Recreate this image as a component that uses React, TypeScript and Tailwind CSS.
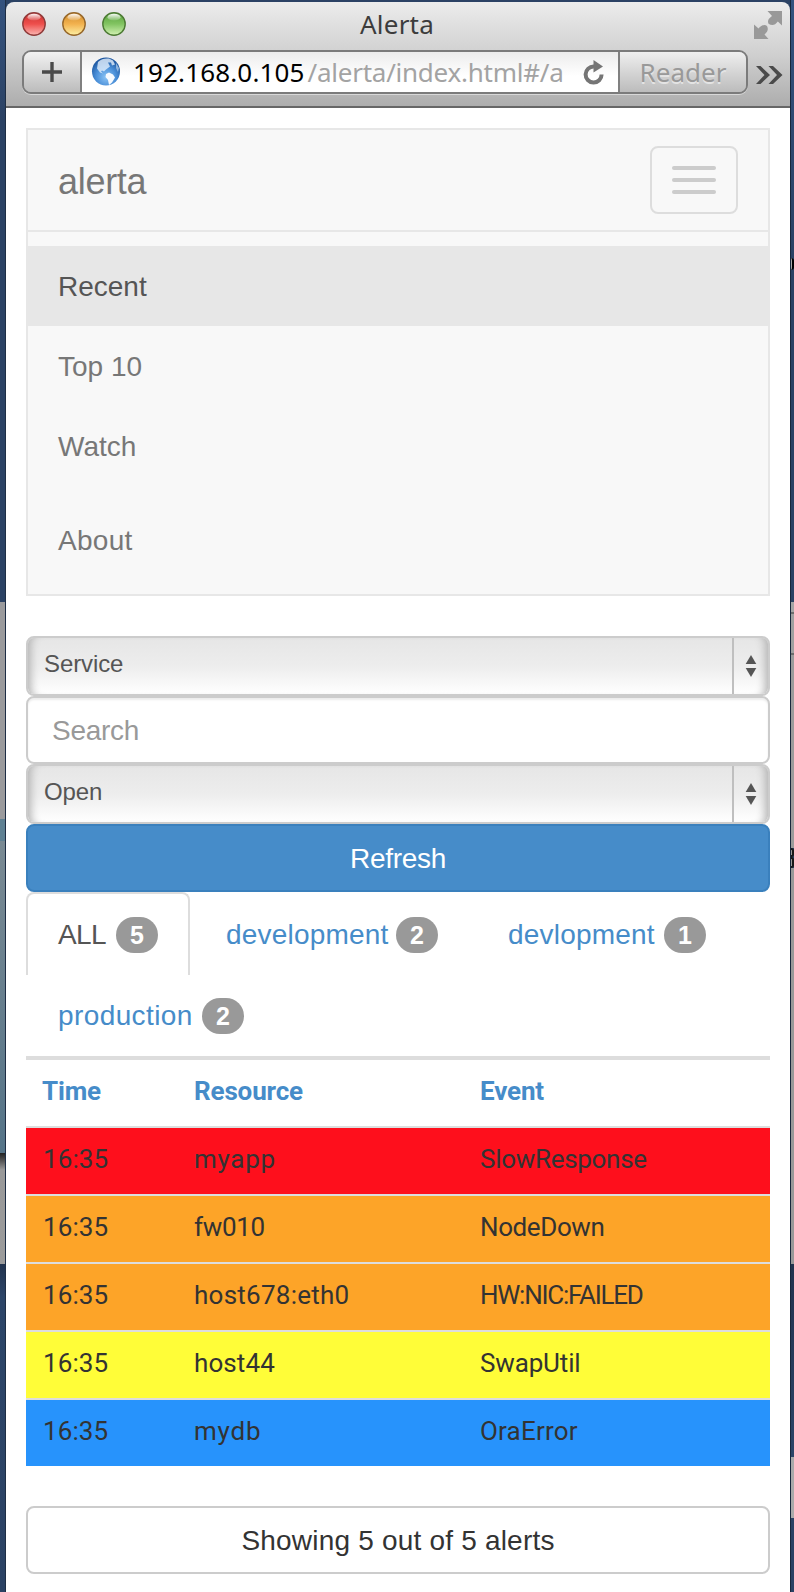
import React from "react";

const SANS = "font-['Liberation_Sans',Arial,sans-serif]";

const navLinks = [
  { label: "Recent", cls: "bg-[#e7e7e7] text-[#555]" },
  { label: "Top 10", cls: "text-[#777]" },
  { label: "Watch", cls: "text-[#777]" },
  { label: "About", cls: "mt-[14px] text-[#777] tracking-[0.3px]" },
];

const alerts = [
  { time: "16:35", resource: "myapp", event: "SlowResponse", cls: "bg-[#fe0f1c]", rGap: "tracking-[0.7px]", eGap: "tracking-[-0.3px]" },
  { time: "16:35", resource: "fw010", event: "NodeDown", cls: "bg-[#fda428]", rGap: "tracking-[-0.3px]", eGap: "tracking-[-0.4px]" },
  { time: "16:35", resource: "host678:eth0", event: "HW:NIC:FAILED", cls: "bg-[#fda428]", rGap: "tracking-[0.25px]", eGap: "tracking-[-1.25px]" },
  { time: "16:35", resource: "host44", event: "SwapUtil", cls: "bg-[#fffd38]", rGap: "tracking-[0.1px]", eGap: "tracking-[-0.15px]" },
  { time: "16:35", resource: "mydb", event: "OraError", cls: "bg-[#2793fc]", rGap: "tracking-[0.8px]", eGap: "tracking-[0.2px]" },
];

function TrafficLight({ id, edge, dark, mid, light }: { id: string; edge: string; dark: string; mid: string; light: string }) {
  return (
    <svg width="24" height="24" viewBox="0 0 24 24" className="block">
      <defs>
        <linearGradient id={id} x1="0" y1="0" x2="0" y2="1">
          <stop offset="0" stopColor={dark} />
          <stop offset="0.5" stopColor={mid} />
          <stop offset="1" stopColor={light} />
        </linearGradient>
        <linearGradient id={id + "g"} x1="0" y1="0" x2="0" y2="1">
          <stop offset="0" stopColor="#fff" stopOpacity="0.95" />
          <stop offset="1" stopColor="#fff" stopOpacity="0.1" />
        </linearGradient>
      </defs>
      <circle cx="12" cy="12" r="11.2" fill={`url(#${id})`} stroke={edge} strokeWidth="1.4" />
      <ellipse cx="12" cy="5.2" rx="6.5" ry="3.4" fill={`url(#${id}g)`} />
    </svg>
  );
}

function Globe() {
  return (
    <svg width="30" height="30" viewBox="0 0 30 30" className="block">
      <defs>
        <radialGradient id="sea" cx="0.5" cy="0.7" r="0.65">
          <stop offset="0" stopColor="#8cc4f5" />
          <stop offset="0.55" stopColor="#4a8fd8" />
          <stop offset="1" stopColor="#1d569f" />
        </radialGradient>
      </defs>
      <circle cx="15" cy="14.5" r="14" fill="url(#sea)" />
      <path d="M7 5C10 2 14 1 18 1.5l4 2 2 4-3 1-1-3-3 0 2 4-4 3-2 2-2-1-1 1 2 2-3-1-3-4Z" fill="#e3effb" opacity="0.8" />
      <path d="M15 17l3-1.500 4 2 2 3-3 5-3 2.500-1-5-2.500-3Z" fill="#f6faff" />
      <path d="M25 6l3 5-1 4-2-4Z" fill="#cfe2f7" opacity="0.6" />
    </svg>
  );
}

function SelectBox({ label }: { label: string }) {
  return (
    <div className="flex h-[60px] w-full overflow-hidden rounded-[8px] border-2 border-[#ccc] bg-linear-to-b from-[#e6e6e6] via-[#ededed] to-white shadow-[inset_10px_0_8px_-7px_#b4b4b4,inset_-10px_0_8px_-7px_#b4b4b4]">
      <div className="flex-1 pl-4 text-[24px] leading-[51px] tracking-[-0.1px] text-[#555]">{label}</div>
      <div className="flex w-[36px] items-center justify-center border-l-2 border-[#bfbfbf]">
        <svg width="12" height="22" viewBox="0 0 12 22" className="mr-[1px] block" fill="#555">
          <path d="M6 0 11.300 9H0.700Z" />
          <path d="M6 22 11.300 13H0.700Z" />
        </svg>
      </div>
    </div>
  );
}

function Badge({ n }: { n: number }) {
  return (
    <span className="flex h-9 w-[42px] items-center justify-center rounded-[20px] bg-[#999] pt-[1px] text-[25px] leading-none font-bold text-white">
      {n}
    </span>
  );
}

export default function App() {
  return (
    <div className={`relative flex h-[1592px] w-[794px] overflow-hidden bg-[#2b4264] ${SANS}`}>
      <div className="flex w-[6px] shrink-0 flex-col border-r border-black/30">
        <div className="h-[602px] bg-linear-to-b from-[#34527e] via-[#2b4264] via-20% to-[#2b4264]" />
        <div className="h-[217px] bg-[#9b9b9d]" />
        <div className="h-[22px] bg-[#5f8193]" />
        <div className="h-[312px] bg-linear-to-b from-[#7a8a93] to-[#557488]" />
        <div className="h-[111px] bg-linear-to-b from-[#222] via-[#999] via-15% to-[#9b9b9b]" />
        <div className="flex-1 bg-linear-to-b from-[#22334e] via-[#2c4568] via-10% to-[#2b4264]" />
      </div>

      <div className="flex w-[784px] shrink-0 flex-col pt-[2px]">
        <header className="flex h-[106px] flex-col rounded-t-[8px] border-b-2 border-[#666] bg-linear-to-b from-[#ececec] via-[#d0d0d0] via-50% to-[#adadad]">
          <div className="flex h-[48px] items-start pr-2 pl-4">
            <div className="flex w-[110px] gap-4 pt-[10px]">
              <TrafficLight id="r" edge="#8f3b3a" dark="#c9302f" mid="#ee4f4c" light="#fbb7b3" />
              <TrafficLight id="y" edge="#96672a" dark="#d08a2b" mid="#f2b24f" light="#fdf0a4" />
              <TrafficLight id="g" edge="#4c7a34" dark="#57a03b" mid="#82c462" light="#d3f2b4" />
            </div>
            <div className="flex-1 pr-[10px] text-center font-['Noto_Sans',sans-serif] text-[26px] leading-[44px] tracking-[0.2px] text-[#3c3c3c]">
              Alerta
            </div>
            <div className="flex w-[110px] justify-end pt-[9px]">
              <svg width="28" height="28" viewBox="0 0 28 28" className="block" fill="#999">
                <path d="M13.500 0H28V14.500L23.800 10.500C21 14.500 18 14.500 14.800 13C13 10 14.500 7.500 18 5Z" />
                <path d="M0 13.500V28H14.500L10.500 23.500C14 20.500 14.500 18 13 15C10.500 13 7.500 14.500 4.500 17.500Z" />
              </svg>
            </div>
          </div>
          <div className="flex items-center pl-4">
            <div className="flex h-[44px] w-[726px] overflow-hidden rounded-[9px] border-2 border-[#7b7b7b] shadow-[0_1px_0_#d8d8d8]">
              <div className="flex w-[58px] items-center justify-center border-r-2 border-[#808080] bg-linear-to-b from-[#f2f2f2] to-[#bcbcbc]">
                <svg width="20" height="20" viewBox="0 0 20 20" className="block">
                  <path d="M10 0V20M0 10H20" stroke="#4a4a4a" strokeWidth="3.400" />
                </svg>
              </div>
              <div className="flex flex-1 items-center bg-linear-to-b from-[#ececec] via-white via-60% to-white pl-[9px] font-['Noto_Sans',sans-serif] text-[26px] leading-[40px]">
                <Globe />
                <span className="ml-[12px] tracking-[0.15px] text-black">192.168.0.105</span>
                <span className="ml-[3px] flex-1 tracking-[-0.25px] whitespace-nowrap text-[#a3a3a3]">/alerta/index.html#/a</span>
                <svg width="22" height="25" viewBox="0 0 22 25" className="mr-[13px] block">
                  <path d="M18.600 14.500A8 8 0 1 1 11 6.500" fill="none" stroke="#757575" strokeWidth="4" />
                  <path d="M10.500 0 20 6.500 10.500 12.500Z" fill="#757575" />
                </svg>
              </div>
              <div className="w-[128px] border-l-2 border-[#808080] bg-linear-to-b from-[#efefef] to-[#bcbcbc] text-center font-['Noto_Sans',sans-serif] text-[26px] leading-[40px] text-[#999] [text-shadow:0_2px_0_#e4e4e4]">
                Reader
              </div>
            </div>
            <svg width="28" height="20" viewBox="0 0 28 20" className="mt-[6px] ml-[8px] block" fill="#4a4a4a">
              <path d="M0 1H4.500L14 10 4.500 19H0L8.500 10Z" />
              <path d="M12.500 1H17L26.500 10 17 19H12.500L21 10Z" />
            </svg>
          </div>
        </header>

        <main className="flex flex-1 flex-col bg-white px-5 pt-5">
          <nav className="flex h-[468px] w-full flex-col border-2 border-[#e7e7e7] bg-[#f8f8f8]">
            <div className="mb-[14px] flex h-[102px] shrink-0 items-center justify-between border-b-2 border-[#e7e7e7] px-[30px]">
              <span className="pt-[4px] text-[36px] leading-none tracking-[-0.3px] text-[#777]">alerta</span>
              <button className="flex h-[68px] w-[88px] flex-col items-center justify-center gap-2 rounded-[8px] border-2 border-[#ddd]">
                <span className="h-1 w-[44px] rounded-[2px] bg-[#ccc]" />
                <span className="h-1 w-[44px] rounded-[2px] bg-[#ccc]" />
                <span className="h-1 w-[44px] rounded-[2px] bg-[#ccc]" />
              </button>
            </div>
            {navLinks.map((l) => (
              <a key={l.label} className={`block h-20 shrink-0 pl-[30px] text-[28px] leading-[82px] ${l.cls}`}>
                {l.label}
              </a>
            ))}
          </nav>

          <form className="mt-10 flex flex-col">
            <SelectBox label="Service" />
            <div className="h-[68px] rounded-[8px] border-2 border-[#ccc] bg-white pl-6 text-[28px] leading-[66px] tracking-[-0.3px] text-[#999] shadow-[inset_0_2px_2px_rgba(0,0,0,0.075)]">
              Search
            </div>
            <SelectBox label="Open" />
            <div className="h-[68px] rounded-[8px] border-2 border-[#3a80bd] bg-[#468cc9] text-center text-[28px] leading-[66px] tracking-[-0.3px] text-white">
              Refresh
            </div>
          </form>

          <div className="flex h-[166px] flex-wrap content-start border-b-2 border-[#ddd] text-[28px] leading-[40px] text-[#468cc9]">
            <div className="mr-1 flex h-[83px] w-[164px] items-center gap-[10px] rounded-t-[8px] border-2 border-b-0 border-[#ddd] pl-[30px] text-[#555]">
              <span className="tracking-[-0.6px]">ALL</span>
              <Badge n={5} />
            </div>
            <div className="mr-1 flex h-[83px] items-center gap-[8px] pt-[2px] pr-[32px] pl-[32px]">
              <span className="w-[162px] tracking-[0.2px]">development</span>
              <Badge n={2} />
            </div>
            <div className="flex h-[83px] items-center gap-[8px] pt-[2px] pl-[34px]">
              <span className="w-[148px] tracking-[0.2px]">devlopment</span>
              <Badge n={1} />
            </div>
            <div className="flex h-[80px] w-full items-center gap-[8px] pt-[2px] pl-[32px]">
              <span className="w-[136px] tracking-[0.4px]">production</span>
              <Badge n={2} />
            </div>
          </div>

          <div className="border-t-2 border-[#ddd] font-['Roboto',sans-serif] text-[26px]">
            <div className="grid h-[66px] grid-cols-[152px_286px_1fr] pl-4 leading-[62px] font-bold tracking-[-0.15px] text-[#468cc9]">
              <span>Time</span>
              <span>Resource</span>
              <span>Event</span>
            </div>
            {alerts.map((a, i) => (
              <div
                key={i}
                className={`grid h-[68px] grid-cols-[151px_286px_1fr] border-t-2 border-[#ddd] pl-[17px] leading-[62px] text-[#333] ${a.cls}`}
              >
                <span className="tracking-[0.1px]">{a.time}</span>
                <span className={a.rGap}>{a.resource}</span>
                <span className={a.eGap}>{a.event}</span>
              </div>
            ))}
          </div>

          <div className="mt-10 h-[68px] rounded-[8px] border-2 border-[#ccc] text-center text-[28px] leading-[66px] tracking-[0.2px] text-[#333]">
            Showing 5 out of 5 alerts
          </div>
        </main>
      </div>

      <div className="flex w-[4px] shrink-0 flex-col overflow-hidden border-l border-black/40">
        <div className="h-[258px] bg-linear-to-b from-[#34527e] to-[#2b4264]" />
        <div className="h-[12px] rounded-r-full border-r-2 border-black bg-[#aaa]" />
        <div className="h-[332px] bg-[#2b4264]" />
        <div className="h-[10px] bg-[#a5a5a5]" />
        <div className="h-[43px] border-y-2 border-[#6c6c6c] bg-[#a0a0a0]" />
        <div className="h-[193px] bg-[#9b9b9b]" />
        <div className="h-[9px] rounded-r-full border-2 border-l-0 border-[#181818] bg-[#9b9b9b]" />
        <div className="h-[11px] rounded-r-full border-2 border-l-0 border-[#181818] bg-[#9b9b9b]" />
        <div className="h-[396px] bg-[#999]" />
        <div className="h-[193px] bg-linear-to-b from-[#22334e] to-[#2c4568]" />
        <div className="h-[61px] bg-[#aaa]" />
        <div className="flex-1 bg-[#2b4264]" />
      </div>
    </div>
  );
}
